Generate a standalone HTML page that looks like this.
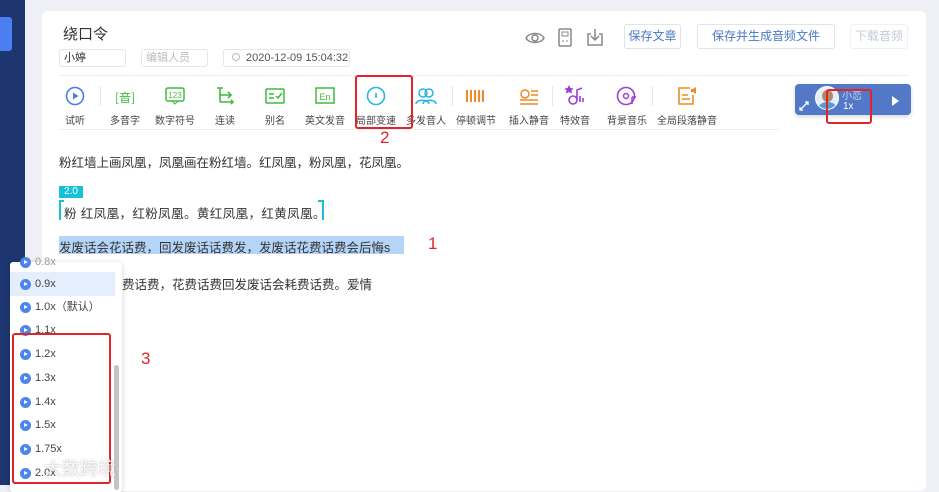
<!DOCTYPE html>
<html><head><meta charset="utf-8"><style>
*{margin:0;padding:0;box-sizing:border-box}
body{width:939px;height:485px;overflow:hidden;background:#eef0f5;font-family:"Liberation Sans","Noto Sans CJK SC",sans-serif;position:relative;color:#333}
.abs{position:absolute}
.side{left:0;top:0;width:25px;height:485px;background:#1d3670}
.card{left:42px;top:11px;width:884px;height:480px;background:#fff;border-radius:6px}
.inp{border:1px solid #e3e6eb;border-radius:3px;height:18px;font-size:11px;line-height:16px;padding-left:4px}
.btn{border:1px solid #dfe3ea;border-radius:3px;height:25px;font-size:12px;line-height:23px;text-align:center;color:#4a78c8}
.tool{width:60px;text-align:center;font-size:10px;color:#444}
.tool svg{display:block;margin:0 auto 6px}
.sep{width:1px;height:20px;background:#e5e7ec;top:86px}
.txt{font-size:12.5px;color:#333;left:59px;white-space:nowrap}
.red{border:2px solid #e0242a;border-radius:3px}
.rn{color:#e0242a;font-size:17px}
.dd{left:10px;top:262px;width:112px;height:230px;background:#fff;box-shadow:0 1px 6px rgba(0,0,0,.18);border-radius:3px}
.it{left:0;width:105px;height:23px;font-size:11px;line-height:23px;padding-left:25px;color:#444}
.it:before{content:"";position:absolute;left:10px;top:6px;width:11px;height:11px;border-radius:50%;background:#4d85ee}
.it:after{content:"";position:absolute;left:14px;top:9px;border-left:4px solid #fff;border-top:2.5px solid transparent;border-bottom:2.5px solid transparent}
</style></head><body>
<div class="abs side"></div>
<div class="abs" style="left:0;top:17px;width:12px;height:34px;background:#4b7ef0;border-radius:0 3px 3px 0"></div>
<div class="abs card"></div>
<div class="abs" style="left:63px;top:23px;font-size:15px;color:#333">绕口令</div>
<div class="abs inp" style="left:59px;top:49px;width:67px">小婷</div>
<div class="abs inp" style="left:141px;top:49px;width:67px;color:#bbb">编辑人员</div>
<div class="abs inp" style="left:223px;top:49px;width:127px;color:#555;padding-left:22px">2020-12-09 15:04:32</div>
<div class="abs" style="left:232px;top:53px;width:8px;height:8px;border:1px solid #bbb;border-radius:50%"></div>
<svg class="abs" style="left:525px;top:30px" width="20" height="16" viewBox="0 0 20 16"><path d="M1 8C4 2 16 2 19 8C16 14 4 14 1 8Z" fill="none" stroke="#888" stroke-width="1.5"/><circle cx="10" cy="8" r="3" fill="none" stroke="#888" stroke-width="1.5"/></svg>
<svg class="abs" style="left:557px;top:28px" width="16" height="19" viewBox="0 0 16 19"><rect x="2" y="1" width="12" height="17" rx="1" fill="none" stroke="#888" stroke-width="1.5"/><rect x="5" y="4" width="6" height="4" fill="none" stroke="#888"/><path d="M5 13h2M9 13h2" stroke="#888"/></svg>
<svg class="abs" style="left:586px;top:28px" width="18" height="18" viewBox="0 0 18 18"><path d="M5 6H2v11h14V6h-3M9 1v11M5 8l4 4 4-4" fill="none" stroke="#888" stroke-width="1.5"/></svg>
<div class="abs btn" style="left:624px;top:24px;width:57px">保存文章</div>
<div class="abs btn" style="left:697px;top:24px;width:138px">保存并生成音频文件</div>
<div class="abs btn" style="left:850px;top:24px;width:58px;color:#c3cbd8;border-color:#eef0f3">下载音频</div>
<div class="abs" style="left:59px;top:75px;width:849px;height:1px;background:#eceef2"></div>
<div class="abs" style="left:59px;top:129px;width:720px;height:1px;background:#eceef2"></div>

<div class="abs tool" style="left:45px;top:86px"><svg width="20" height="20"><circle cx="10" cy="10" r="8.5" fill="none" stroke="#4a7de8" stroke-width="1.6"/><path d="M8 6.5v7l5.5-3.5z" fill="#4a7de8"/></svg>试听</div>
<div class="abs sep" style="left:100px"></div>
<div class="abs tool" style="left:95px;top:86px"><svg width="22" height="20"><text x="11" y="16" font-size="12" fill="#3dbb3d" text-anchor="middle" font-family="Noto Sans CJK SC">[音]</text></svg>多音字</div>
<div class="abs tool" style="left:145px;top:86px"><svg width="22" height="20"><rect x="2" y="2" width="18" height="13" rx="2" fill="none" stroke="#3dbb3d" stroke-width="1.5"/><text x="11" y="12" font-size="8" fill="#3dbb3d" text-anchor="middle">123</text><path d="M8 15l3 3 3-3" fill="none" stroke="#3dbb3d"/></svg>数字符号</div>
<div class="abs tool" style="left:195px;top:86px"><svg width="22" height="20"><path d="M3 2h6M6 2v14M6 9h11M6 16h13M14 6l3 3-3 3M17 14l2 2-2 2" fill="none" stroke="#3dbb3d" stroke-width="1.6"/></svg>连读</div>
<div class="abs tool" style="left:245px;top:86px"><svg width="22" height="20"><rect x="2" y="3" width="18" height="14" rx="1" fill="none" stroke="#3dbb3d" stroke-width="1.5"/><path d="M5 8h5M5 12h5M12 10l2 2 4-5" fill="none" stroke="#3dbb3d" stroke-width="1.5"/></svg>别名</div>
<div class="abs tool" style="left:295px;top:86px"><svg width="22" height="20"><rect x="2" y="2" width="18" height="15" fill="none" stroke="#3dbb3d" stroke-width="1.5"/><text x="11" y="14" font-size="9" fill="#3dbb3d" text-anchor="middle">En</text></svg>英文发音</div>
<div class="abs tool" style="left:346px;top:86px"><svg width="20" height="20"><circle cx="10" cy="10" r="8.5" fill="none" stroke="#27b6e0" stroke-width="1.6"/><path d="M10 7v5" stroke="#27b6e0" stroke-width="1.6"/></svg>局部变速</div>
<div class="abs tool" style="left:396px;top:86px"><svg width="22" height="20"><circle cx="8" cy="7" r="4" fill="none" stroke="#27b6e0" stroke-width="1.5"/><circle cx="14" cy="7" r="4" fill="none" stroke="#27b6e0" stroke-width="1.5"/><path d="M1 18c0-5 13-5 13 0M8 18c0-5 13-5 13 0" fill="none" stroke="#27b6e0" stroke-width="1.5"/></svg>多发音人</div>
<div class="abs sep" style="left:452px"></div>
<div class="abs tool" style="left:446px;top:86px"><svg width="22" height="20"><path d="M2 4v12M6 4v12M10 4v12M14 4v12M18 4v12" stroke="#f08a24" stroke-width="2"/></svg>停顿调节</div>
<div class="abs tool" style="left:499px;top:86px"><svg width="22" height="20"><circle cx="7" cy="8" r="4" fill="none" stroke="#f08a24" stroke-width="1.5"/><path d="M13 5h7M13 9h7M2 14h18M2 18h18" stroke="#f08a24" stroke-width="1.5"/></svg>插入静音</div>
<div class="abs sep" style="left:552px"></div>
<div class="abs tool" style="left:545px;top:84px"><svg width="22" height="22"><path d="M5 1l1.5 3 3 .5-2 2 .5 3L5 8l-3 1.5.5-3-2-2 3-.5z" fill="#9b3fd8"/><circle cx="9" cy="16" r="4" fill="none" stroke="#9b3fd8" stroke-width="1.6"/><path d="M13 16V6l5-2M16 12v6M19 14v4" fill="none" stroke="#9b3fd8" stroke-width="1.6"/></svg>特效音</div>
<div class="abs tool" style="left:597px;top:86px"><svg width="22" height="20"><circle cx="10" cy="10" r="8.5" fill="none" stroke="#9b3fd8" stroke-width="1.6"/><circle cx="10" cy="10" r="2.5" fill="none" stroke="#9b3fd8" stroke-width="1.5"/><path d="M16 11v7M16 11h4" stroke="#9b3fd8" stroke-width="1.5"/></svg>背景音乐</div>
<div class="abs sep" style="left:652px"></div>
<div class="abs tool" style="left:657px;top:86px"><svg width="22" height="20"><path d="M14 2H3v16h14V9" fill="none" stroke="#f08a24" stroke-width="1.6"/><path d="M6 9h6M6 13h8" stroke="#f08a24" stroke-width="1.5"/><path d="M15 3h2l3-2v7l-3-2h-2z" fill="#f08a24"/></svg>全局段落静音</div>

<div class="abs" style="left:795px;top:84px;width:116px;height:31px;background:#5378c7;border-radius:4px;box-shadow:0 2px 4px rgba(0,0,0,.15)"></div>
<svg class="abs" style="left:799px;top:101px" width="10" height="10"><path d="M1 9l8-8M1 6v3h3M6 1h3v3" fill="none" stroke="#fff" stroke-width="1.3"/></svg>
<div class="abs" style="left:815px;top:86px;width:24px;height:24px;border-radius:50%;background:#e8eef7;border:1px solid #fff;overflow:hidden"><div style="position:absolute;left:6px;top:3px;width:11px;height:12px;border-radius:50%;background:#b08a70"></div><div style="position:absolute;left:3px;top:15px;width:17px;height:10px;border-radius:50% 50% 0 0;background:#4aa0d8"></div></div>
<div class="abs" style="left:842px;top:87px;font-size:10px;color:#c8d4ee">小恋</div>
<div class="abs" style="left:843px;top:101px;font-size:10px;color:#fff">1x</div>
<div class="abs" style="left:892px;top:96px;border-left:7px solid #fff;border-top:5px solid transparent;border-bottom:5px solid transparent"></div>

<div class="abs txt" style="top:152px">粉红墙上画凤凰，凤凰画在粉红墙。红凤凰，粉凤凰，花凤凰。</div>
<div class="abs" style="left:59px;top:186px;width:24px;height:12px;background:#19c1d8;color:#fff;font-size:10px;line-height:12px;text-align:center">2.0</div>
<div class="abs" style="left:59px;top:200px;width:2px;height:20px;background:#19c1d8"></div>
<div class="abs" style="left:59px;top:200px;width:5px;height:2px;background:#19c1d8"></div>
<div class="abs" style="left:322px;top:200px;width:2px;height:20px;background:#19c1d8"></div>
<div class="abs" style="left:318px;top:200px;width:5px;height:2px;background:#19c1d8"></div>
<div class="abs txt" style="top:203px;left:64px;letter-spacing:0.4px">粉 红凤凰，红粉凤凰。黄红凤凰，红黄凤凰。</div>
<div class="abs" style="left:59px;top:236px;width:345px;height:18px;background:#b5d5f8"></div>
<div class="abs txt" style="top:237px">发废话会花话费，回发废话话费发，发废话花费话费会后悔s</div>
<div class="abs txt" style="top:274px;left:122px">费话费，花费话费回发废话会耗费话费。爱情</div>

<div class="abs red" style="left:355px;top:75px;width:58px;height:54px"></div>
<div class="abs rn" style="left:380px;top:128px">2</div>
<div class="abs red" style="left:826px;top:89px;width:46px;height:35px"></div>
<div class="abs rn" style="left:428px;top:234px">1</div>
<div class="abs rn" style="left:141px;top:349px">3</div>

<div class="abs dd">
<div class="abs" style="left:0;top:10px;width:105px;height:24px;background:#e5eefd"></div>
<div class="abs it" style="top:-11px;color:#999">0.8x</div>
<div class="abs it" style="top:11px">0.9x</div>
<div class="abs it" style="top:34px">1.0x（默认）</div>
<div class="abs it" style="top:57px">1.1x</div>
<div class="abs it" style="top:81px">1.2x</div>
<div class="abs it" style="top:105px">1.3x</div>
<div class="abs it" style="top:129px">1.4x</div>
<div class="abs it" style="top:152px">1.5x</div>
<div class="abs it" style="top:176px">1.75x</div>
<div class="abs it" style="top:200px">2.0x</div>
<div class="abs" style="left:104px;top:103px;width:5px;height:125px;background:#c4c4c4;border-radius:3px"></div>
</div>
<div class="abs red" style="left:12px;top:333px;width:99px;height:151px"></div>
<div class="abs" style="left:44px;top:455px;font-size:18px;color:rgba(255,255,255,.85);text-shadow:0 0 2px rgba(0,0,0,.3)">大数跨境</div>
</body></html>
